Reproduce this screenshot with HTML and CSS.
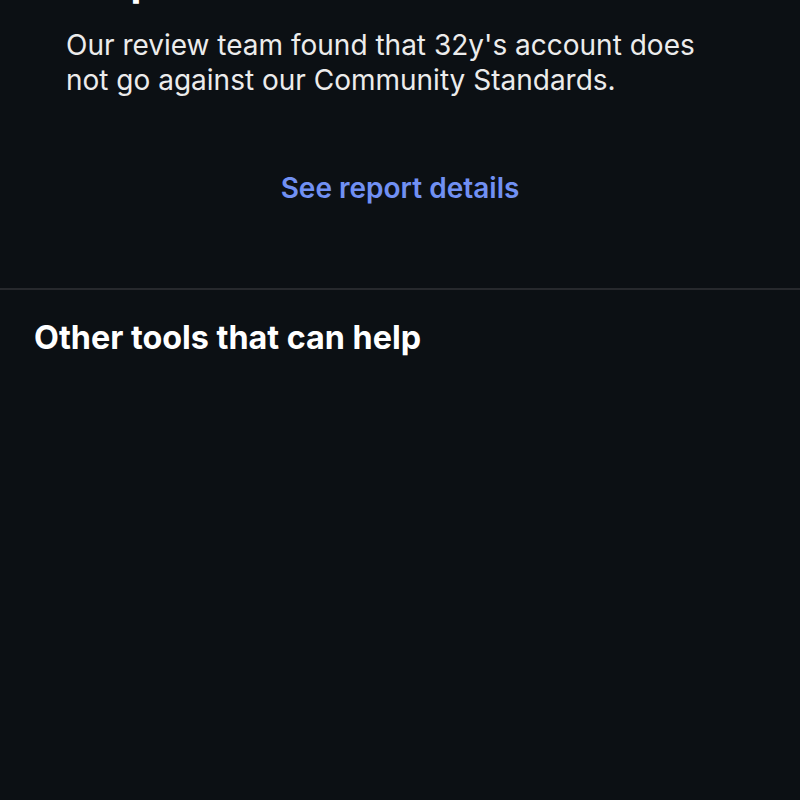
FILE: index.html
```html
<!DOCTYPE html>
<html lang="en">
<head>
<meta charset="utf-8">
<title>Report update</title>
<link rel="stylesheet" href="styles.css">
</head>
<body>
<div class="screen">
  <section class="result">
    <h1 class="result-title">No problem found</h1>
    <p class="result-text">Our review team found that 32y's account does not go against our Community Standards.</p>
    <div class="link-row"><a class="details-link" href="#">See report details</a></div>
  </section>
  <section class="tools">
    <h2 class="tools-title">Other tools that can help</h2>
  </section>
</div>
</body>
</html>
```
FILE: styles.css
```css
html, body {
  margin: 0;
  padding: 0;
  background: #0c1014;
}
.screen {
  width: 800px;
  height: 800px;
  overflow: hidden;
  background: #0c1014;
  color: #f5f5f5;
  font-family: Inter, Roboto, "Noto Sans", sans-serif;
}
.result {
  display: flow-root;
  padding: 0 74px 83px 66px;
  border-bottom: 2px solid #27292d;
}
.result-title {
  margin: -42px 0 0 0;
  font-size: 40px;
  line-height: 48px;
  font-weight: 700;
  color: #ffffff;
  white-space: nowrap;
}
.result-text {
  margin: 22px 0 0;
  font-size: 28px;
  line-height: 35px;
  font-weight: 400;
  color: #ececec;
}
.link-row {
  display: flex;
  justify-content: center;
  margin: 73px -74px 0 -66px;
  line-height: 34px;
}
.details-link {
  color: #7190f3;
  text-decoration: none;
  font-size: 28px;
  line-height: 34px;
  font-weight: 600;
}
.tools {
  display: flow-root;
  padding: 0 34px;
}
.tools-title {
  margin: 28px 0 0;
  font-size: 32.3px;
  line-height: 40px;
  font-weight: 700;
  color: #ffffff;
}
```
